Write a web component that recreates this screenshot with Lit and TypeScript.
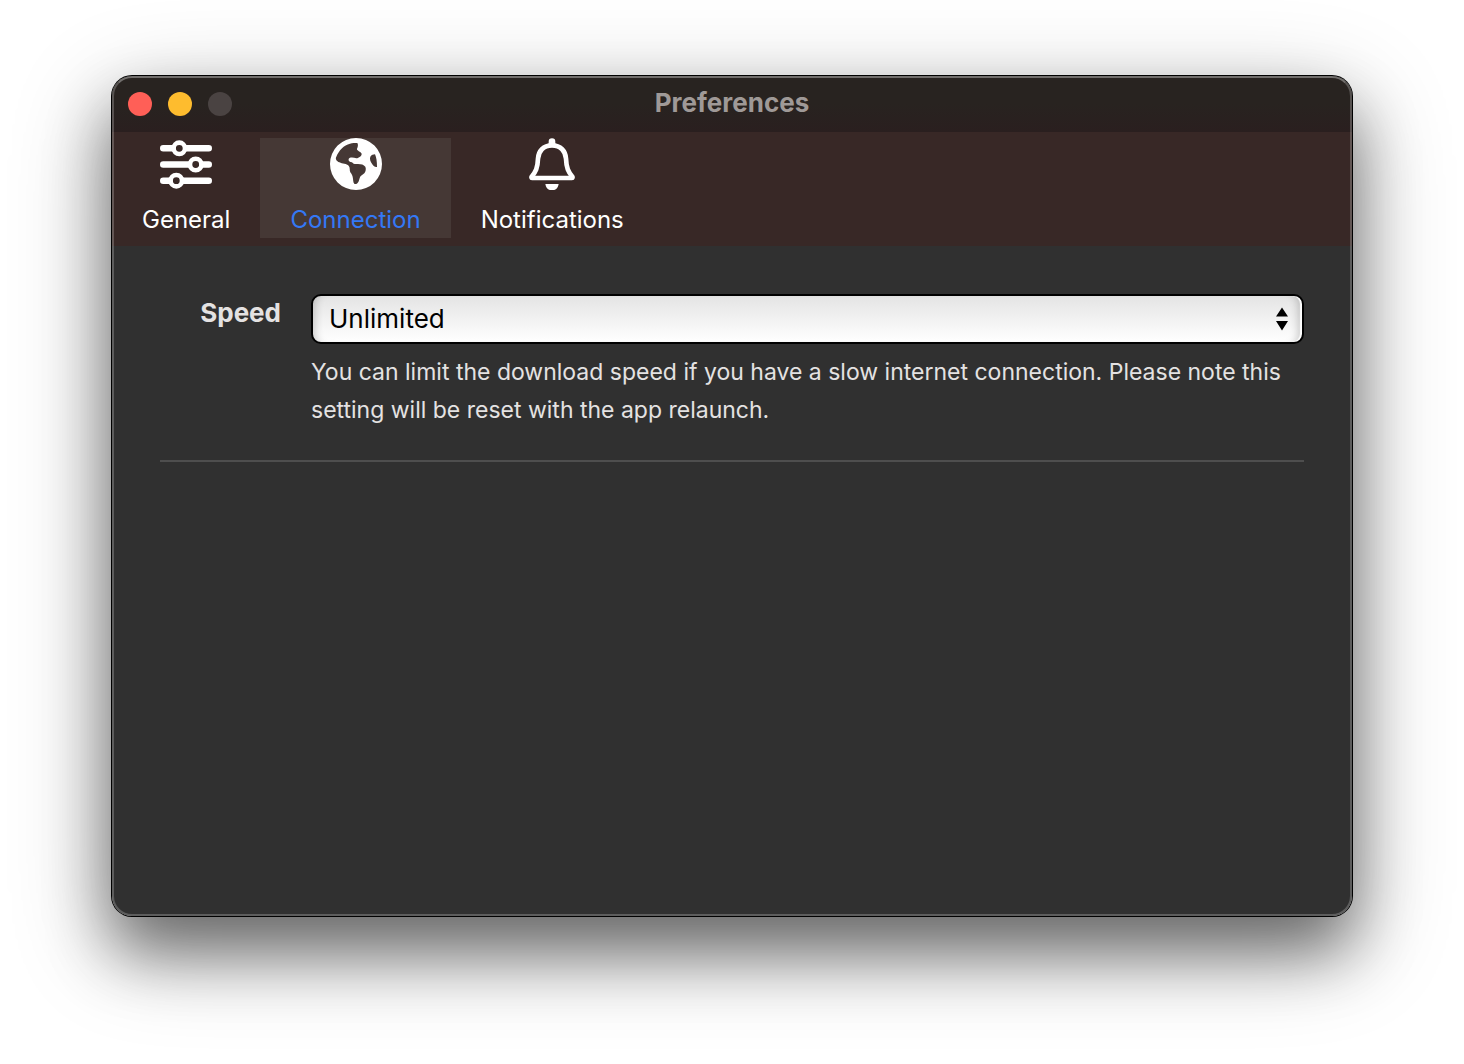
import { LitElement, html, svg, css } from "lit";
import { customElement, state } from "lit/decorators.js";
import { classMap } from "lit/directives/class-map.js";

const slidersIcon = svg`
  <svg class="icon" viewBox="0 0 52 52" aria-hidden="true">
    <g fill="none" stroke="currentColor" stroke-linecap="round">
      <path stroke-width="6.4" d="M3.2 10.3H12.4M26.2 10.3H48.8M3.2 26.5H28.8M42.6 26.5H48.8M3.2 42.7H9.4M23.2 42.7H48.8" />
      <g stroke-width="4.6">
        <circle cx="19.3" cy="10.3" r="5.7" />
        <circle cx="35.7" cy="26.5" r="5.7" />
        <circle cx="16.3" cy="42.7" r="5.7" />
      </g>
    </g>
  </svg>`;

const globeIcon = svg`
  <svg class="icon" viewBox="0 0 156 156" aria-hidden="true">
    <path fill="currentColor" fill-rule="evenodd" d="M78 0a78 78 0 1 0 0 156a78 78 0 1 0 0-156z
      M82 15C85 20 84 27 81 32C79 38 93 40 95 47C95 55 87 59 79 61C70 58 59 57 56 63C54 68 59 72 66 73C69 78 76 79 84 78C94 78 101 80 106 86C109 92 107 101 103 106C98 111 92 112 90 118C87 126 86 137 78 138C70 139 70 130 69 122C68 113 66 110 61 103C58 97 61 89 56 83C50 77 37 78 28 73C20 69 15 63 19 56C26 38 42 21 60 17C67 15 75 15 82 15z
      M135 49C139 58 141 70 141 87C134 88 129 83 126 77C122 71 118 63 121 56C124 50 130 50 135 49z" />
  </svg>`;

const bellIcon = svg`
  <svg class="icon" viewBox="0 0 156 156" aria-hidden="true">
    <path fill="none" stroke="currentColor" stroke-width="14" stroke-linejoin="round"
      d="M78 22C52 22 37 40 36 62C35 90 29 101 17 116C16 118 16 120 18 120H138C140 120 140 118 139 116C127 101 121 90 120 62C119 40 104 22 78 22z" />
    <path fill="currentColor" d="M68 22V11a10 10 0 0 1 20 0V22zM58 138H98C96 150 89 157 78 157S60 150 58 138z" />
  </svg>`;

const tabs = [
  { id: "general", label: "General", icon: slidersIcon },
  { id: "connection", label: "Connection", icon: globeIcon },
  { id: "notifications", label: "Notifications", icon: bellIcon },
];

@customElement("app-root")
export class AppRoot extends LitElement {
  static styles = css`
    :host {
      display: flex;
      box-sizing: border-box;
      min-height: 100vh;
      padding: 76px 112px 148px;
      background: #fff;
      overflow: hidden;
      font-family: Inter, "Liberation Sans", sans-serif;
    }
    .window {
      position: relative;
      flex: 1;
      display: flex;
      flex-direction: column;
      border-radius: 20px;
      overflow: hidden;
      background: #303030;
      color: #e4e2e2;
    }
    .frame {
      flex: 1;
      display: flex;
      border-radius: 20px;
      box-shadow: 0 0 0 1px #000, 0 36px 64px rgba(0, 0, 0, 0.46), 0 28px 100px rgba(0, 0, 0, 0.3);
    }
    .window::after {
      content: "";
      position: absolute;
      inset: 0;
      border: 2px solid rgba(255, 255, 255, 0.22);
      border-top-color: rgba(255, 255, 255, 0.34);
      border-radius: 20px;
      pointer-events: none;
    }
    .titlebar {
      display: grid;
      grid-template-columns: 1fr auto 1fr;
      align-items: center;
      height: 56px;
      padding: 0 16px;
      box-sizing: border-box;
      background: linear-gradient(#282320 50%, #2a1f1f);
    }
    .lights {
      display: flex;
      gap: 16px;
    }
    .light {
      width: 24px;
      height: 24px;
      padding: 0;
      border: 0;
      border-radius: 50%;
    }
    .close { background: #ff5f57; }
    .minimize { background: #febc2e; }
    .zoom { background: #4a4342; }
    .title {
      margin: 0;
      padding-bottom: 2px;
      font-size: 26px;
      line-height: 32px;
      font-weight: 700;
      color: #9f9997;
    }
    .toolbar {
      display: flex;
      padding: 6px 0 8px;
      background: #382826;
    }
    .tab {
      display: flex;
      flex-direction: column;
      align-items: center;
      justify-content: flex-start;
      gap: 15px;
      height: 100px;
      padding: 0 30px;
      border: 0;
      background: transparent;
      color: #fff;
      font: 400 24px/30px Inter, "Liberation Sans", sans-serif;
    }
    .selected { background: #453835; }
    .selected .label { color: #3478f6; }
    .icon {
      display: block;
      width: 52px;
      height: 52px;
      flex: none;
    }
    .content { padding: 48px; }
    .row {
      display: grid;
      grid-template-columns: 121px 1fr;
      column-gap: 30px;
      padding-bottom: 31px;
      border-bottom: 2px solid #4e4e4e;
    }
    .name {
      text-align: right;
      font-size: 26px;
      line-height: 38px;
      font-weight: 700;
    }
    .picker {
      position: relative;
      display: flex;
    }
    .select {
      appearance: none;
      flex: 1;
      min-width: 0;
      height: 50px;
      padding: 0 16px;
      border: 2px solid #000;
      border-radius: 10px;
      background: linear-gradient(#e4e4e4, #fff);
      box-shadow: inset -2px 0 1px #fff, inset 8px 0 8px -6px rgba(0, 0, 0, 0.2), inset -10px 0 8px -6px rgba(0, 0, 0, 0.2);
      color: #000;
      font: 400 26px/32px Inter, "Liberation Sans", sans-serif;
    }
    .arrows {
      position: absolute;
      right: 16px;
      top: 13px;
      width: 12px;
      height: 24px;
      pointer-events: none;
    }
    .hint {
      margin: 9px 0 0;
      font-size: 23px;
      line-height: 38px;
      font-weight: 400;
    }
  `;

  @state() private active = "connection";

  render() {
    return html`
      <div class="frame">
        <main class="window">
          <header class="titlebar">
            <div class="lights">
              <button class="light close" aria-label="Close"></button>
              <button class="light minimize" aria-label="Minimize"></button>
              <button class="light zoom" aria-label="Zoom" disabled></button>
            </div>
            <h1 class="title">Preferences</h1>
          </header>
          <nav class="toolbar">
            ${tabs.map(
              (tab) => html`
                <button
                  class=${classMap({ tab: true, selected: tab.id === this.active })}
                  aria-pressed=${tab.id === this.active}
                  @click=${() => (this.active = tab.id)}
                >
                  ${tab.icon}
                  <span class="label">${tab.label}</span>
                </button>
              `,
            )}
          </nav>
          <section class="content">
            <div class="row">
              <label class="name" for="speed">Speed</label>
              <div>
                <div class="picker">
                  <select class="select" id="speed" aria-describedby="speed-hint">
                    <option>Unlimited</option>
                  </select>
                  <svg class="arrows" viewBox="0 0 12 24" aria-hidden="true">
                    <path d="M6 0.5L12 9.5H0zM0 14H12L6 23.5z" />
                  </svg>
                </div>
                <p class="hint" id="speed-hint">
                  You can limit the download speed if you have a slow internet connection. Please note this
                  setting will be reset with the app relaunch.
                </p>
              </div>
            </div>
          </section>
        </main>
      </div>
    `;
  }
}
